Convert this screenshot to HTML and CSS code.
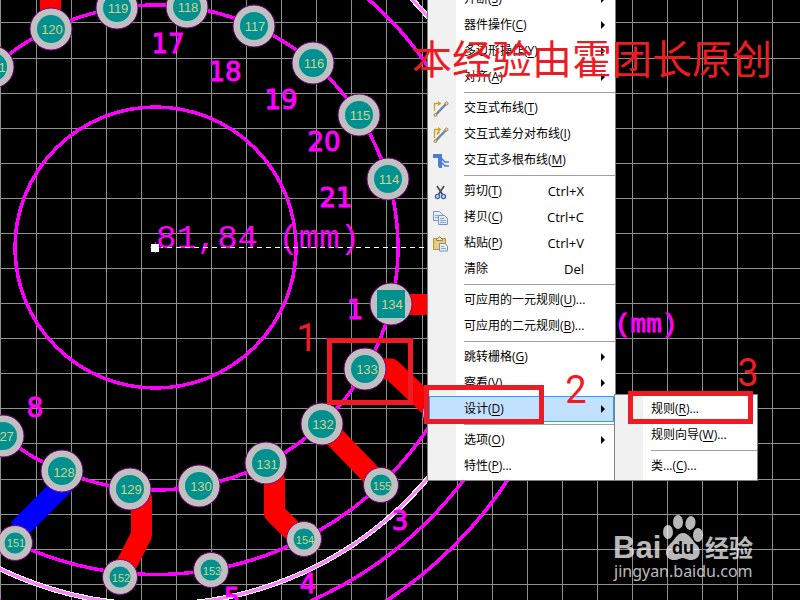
FILE: index.html
```
<!DOCTYPE html>
<html lang="zh-CN">
<head>
    <meta charset="utf-8">
    <title>PCB 编辑器</title>
    <link rel="stylesheet" href="styles.css">
</head>
<body>
    <main class="workspace">
        <!-- Board -->
        <svg class="board" aria-label="PCB">
            <defs>
                <g id="pad">
                    <circle class="ring" r="21"/>
                    <circle class="hole" r="14"/>
                </g>
                <g id="via">
                    <circle class="ring" r="17.5"/>
                    <circle class="hole" r="10.5"/>
                </g>
            </defs>

            <path class="grid" d="M.5 0V3000M36.5 0V3000M71.5 0V3000M106.5 0V3000M141.5 0V3000M176.5 0V3000M211.5 0V3000M246.5 0V3000M281.5 0V3000M316.5 0V3000M351.5 0V3000M386.5 0V3000M422.5 0V3000M457.5 0V3000M492.5 0V3000M527.5 0V3000M562.5 0V3000M597.5 0V3000M632.5 0V3000M667.5 0V3000M702.5 0V3000M737.5 0V3000M772.5 0V3000"/>
            <path class="grid" d="M0 22.5H3000M0 58.5H3000M0 93.5H3000M0 128.5H3000M0 163.5H3000M0 198.5H3000M0 233.5H3000M0 268.5H3000M0 303.5H3000M0 338.5H3000M0 373.5H3000M0 408.5H3000M0 443.5H3000M0 479.5H3000M0 514.5H3000M0 549.5H3000M0 584.5H3000"/>

            <g class="silk">
                <circle cx="155.5" cy="247.5" r="140.5"/>
                <circle cx="155.5" cy="247.5" r="242.5"/>
                <circle cx="155.5" cy="247.5" r="327"/>
                <circle cx="155.5" cy="247.5" r="386"/>
                <circle cx="155.5" cy="247.5" r="422"/>
                <circle class="outline" cx="155.5" cy="247.5" r="357"/>
                <circle class="selected" cx="155.5" cy="247.5" r="357"/>
            </g>

            <g class="trace">
                <path d="M50.500 29V-10"/>
                <path d="M391 304.500H440"/>
                <path d="M365 369H391L440 416"/>
                <path d="M322 424L381 485"/>
                <path d="M266 466L274.500 480V513L303 541"/>
                <path d="M131 489L141.500 498V535L120 577"/>
                <path class="bottom" d="M66 482L18 530"/>
            </g>

            <g class="designator">
                <text x="168" y="53">17</text>
                <text x="225" y="81">18</text>
                <text x="281" y="109">19</text>
                <text x="324" y="151">20</text>
                <text x="336" y="207">21</text>
                <text x="355" y="319">1</text>
                <text x="35" y="417">8</text>
                <text x="400" y="530">3</text>
                <text x="308" y="593">4</text>
                <text x="232" y="607">5</text>
            </g>

            <!-- Pads -->
            <g class="pads">
                <use href="#pad" x="-7" y="67"/><text x="-5" y="72">121</text>
                <use href="#pad" x="51" y="29"/><text x="52" y="34">120</text>
                <use href="#pad" x="117" y="8"/><text x="118" y="13">119</text>
                <use href="#pad" x="187" y="7"/><text x="188" y="12">118</text>
                <use href="#pad" x="254" y="26"/><text x="255" y="31">117</text>
                <use href="#pad" x="313" y="63"/><text x="314" y="68">116</text>
                <use href="#pad" x="359" y="115"/><text x="360" y="120">115</text>
                <use href="#pad" x="388" y="179"/><text x="389" y="184">114</text>
                <circle class="ring" cx="391" cy="304" r="21"/>
                <rect class="hole" x="377" y="290" width="28" height="28"/><text x="392" y="309">134</text>
                <use href="#pad" x="365" y="369"/><text x="367" y="374">133</text>
                <use href="#pad" x="322" y="424"/><text x="323" y="429">132</text>
                <use href="#pad" x="266" y="463"/><text x="267" y="469">131</text>
                <use href="#pad" x="199" y="486"/><text x="201" y="491">130</text>
                <use href="#pad" x="130" y="489"/><text x="131" y="494">129</text>
                <use href="#pad" x="62" y="471"/><text x="64" y="477">128</text>
                <use href="#pad" x="3" y="436"/><text x="3" y="441">127</text>
            </g>
            <g class="pads vias">
                <use href="#via" x="15" y="543"/><text x="16" y="547">151</text>
                <use href="#via" x="120" y="577"/><text x="121" y="582">152</text>
                <use href="#via" x="211" y="570"/><text x="212" y="575">153</text>
                <use href="#via" x="304" y="539"/><text x="305" y="544">154</text>
                <use href="#via" x="381" y="485"/><text x="382" y="490">155</text>
                <use href="#via" x="440" y="413"/>
            </g>

            <!-- Ruler -->
            <text class="measure" x="156" y="248">81,84 (mm)</text>
            <text class="measure unit" x="615" y="332">(mm)</text>
            <path class="ruler" d="M158 247.500H424"/>
            <path class="cross" d="M150 247.500H161M155.500 242V253"/>
            <rect class="origin" x="151" y="244" width="8" height="8"/>

            <!-- Watermark -->
            <g class="watermark">
                <text class="brand" x="613" y="558">Bai</text>
                <ellipse cx="668" cy="532" rx="5" ry="7"/>
                <ellipse cx="678" cy="522" rx="5" ry="7"/>
                <ellipse cx="690.500" cy="523" rx="5" ry="7" transform="rotate(12 690.500 523)"/>
                <ellipse cx="698" cy="535" rx="5" ry="7"/>
                <path d="M683 533C689 533 692 540 696 544C702 549 701 559 692 560C686 560 685 558 683 558C680 558 679 560 674 560C665 560 664 550 669 545C674 541 677 533 683 533Z"/>
                <text class="cn" x="705" y="557">经验</text>
                <text class="url" x="614" y="577">jingyan.baidu.com</text>
            </g>
            <text class="du" x="683" y="554">du</text>
        </svg>

        <!-- Context menu -->
        <div class="menu context" role="menu">
            <button class="item" role="menuitem"><span class="label">开断(<u>S</u>)</span><span class="arrow"></span></button>
            <button class="item" role="menuitem"><span class="label">器件操作(<u>C</u>)</span><span class="arrow"></span></button>
            <button class="item" role="menuitem"><span class="label">多边形操作(<u>Y</u>)</span><span class="arrow"></span></button>
            <button class="item" role="menuitem"><span class="label">对齐(<u>A</u>)</span><span class="arrow"></span></button>
            <hr>
            <button class="item" role="menuitem">
                <svg class="icon" viewBox="0 0 16 16"><path class="gold" d="M1.500 10V2.500H6"/><path class="tip" d="M5 0L8.500 2.500L5 5Z"/><path class="wire" d="M3 13.500L13 3"/><circle class="dot" cx="2.500" cy="14" r="1.500"/><circle class="dot" cx="13.500" cy="2.500" r="1.500"/></svg>
                <span class="label">交互式布线(<u>T</u>)</span>
            </button>
            <button class="item" role="menuitem">
                <svg class="icon" viewBox="0 0 16 16"><path class="gold" d="M1.500 11V2.500H6M4.500 8V5.500H7"/><path class="tip" d="M5 0L8.500 2.500L5 5Z"/><path class="wire" d="M3 13.500L13 3"/><circle class="dot" cx="2.500" cy="14" r="1.500"/><circle class="dot" cx="13.500" cy="2.500" r="1.500"/></svg>
                <span class="label">交互式差分对布线(<u>I</u>)</span>
            </button>
            <button class="item" role="menuitem">
                <svg class="icon" viewBox="0 0 16 16"><path class="bus" d="M0 1H9V15H6L5 13V5H0Z"/><path class="branch" d="M8 5L12 9H16M8 9L12 13H16"/></svg>
                <span class="label">交互式多根布线(<u>M</u>)</span>
            </button>
            <hr>
            <button class="item" role="menuitem">
                <svg class="icon" viewBox="0 0 16 16"><path class="blade" d="M4 2L9.500 10.500M11 2L5.500 10.500"/><circle class="grip" cx="4.500" cy="12.500" r="2"/><circle class="grip" cx="10.500" cy="12.500" r="2"/></svg>
                <span class="label">剪切(<u>T</u>)</span><kbd>Ctrl+X</kbd>
            </button>
            <button class="item" role="menuitem">
                <svg class="icon" viewBox="0 0 16 16"><path class="sheet" d="M.5 1.500H6.500L9.500 4.500V10.500H.5Z"/><path class="sheet" d="M5.500 5.500H11.500L14.500 8.500V14.500H5.500Z"/><path class="lines" d="M2 5.500H5M2 7.500H5M7 8.500H11M7 10.500H13M7 12.500H13"/></svg>
                <span class="label">拷贝(<u>C</u>)</span><kbd>Ctrl+C</kbd>
            </button>
            <button class="item" role="menuitem">
                <svg class="icon" viewBox="0 0 16 16"><path class="board-clip" d="M.5 2.500H12.500V13.500H.5Z"/><path class="clip" d="M3.500 4.500V2.500H5L6.500.5L8 2.500H9.500V4.500Z"/><path class="sheet" d="M6.500 7.500H12L14.500 10V15H6.500Z"/><path class="lines" d="M8 10.500H11M8 12.500H13"/></svg>
                <span class="label">粘贴(<u>P</u>)</span><kbd>Ctrl+V</kbd>
            </button>
            <button class="item" role="menuitem"><span class="label">清除</span><kbd>Del</kbd></button>
            <hr>
            <button class="item" role="menuitem"><span class="label">可应用的一元规则(<u>U</u>)...</span></button>
            <button class="item" role="menuitem"><span class="label">可应用的二元规则(<u>B</u>)...</span></button>
            <hr>
            <button class="item" role="menuitem"><span class="label">跳转栅格(<u>G</u>)</span><span class="arrow"></span></button>
            <button class="item" role="menuitem"><span class="label">察看(<u>V</u>)</span><span class="arrow"></span></button>
            <button class="item active" role="menuitem"><span class="label">设计(<u>D</u>)</span><span class="arrow"></span></button>
            <hr>
            <button class="item" role="menuitem"><span class="label">选项(<u>O</u>)</span><span class="arrow"></span></button>
            <button class="item" role="menuitem"><span class="label">特性(<u>P</u>)...</span></button>
        </div>

        <div class="menu submenu" role="menu">
            <button class="item" role="menuitem"><span class="label">规则(<u>R</u>)...</span></button>
            <button class="item" role="menuitem"><span class="label">规则向导(<u>W</u>)...</span></button>
            <hr>
            <button class="item" role="menuitem"><span class="label">类...(<u>C</u>)...</span></button>
        </div>

        <!-- Annotations -->
        <svg class="notes">
            <rect x="329.500" y="340.500" width="81" height="62"/>
            <rect x="426.500" y="387.500" width="115" height="34"/>
            <rect x="630.500" y="393.500" width="120" height="28"/>
            <text class="step" x="307" y="351">1</text>
            <text class="step" x="576" y="403">2</text>
            <text class="step" x="748" y="386">3</text>
            <text class="credit" x="412" y="74">本经验由霍团长原创</text>
        </svg>
    </main>
</body>
</html>
```
FILE: styles.css
```
body {
    margin: 0;
    background: #000;
    font-family: "Open Sans", "Noto Sans CJK SC", sans-serif;
    font-size: 12px;
}

.workspace {
    position: relative;
    min-height: 100vh;
    overflow: hidden;
}

.board, .notes {
    position: absolute;
    top: 0;
    left: 0;
    width: 100%;
    height: 100%;
}

/* board */
.grid {
    stroke: #909090;
    shape-rendering: crispEdges;
}
.silk circle {
    fill: none;
    stroke: #ff00ff;
    stroke-width: 3.5;
    shape-rendering: crispEdges;
}
.silk .outline {
    stroke: #fff;
    stroke-width: 5;
}
.silk .selected {
    stroke: #ff80ff;
    stroke-width: 3;
}
.trace path {
    fill: none;
    stroke: #ff0000;
    stroke-width: 21;
    stroke-linejoin: round;
}
.trace .bottom {
    stroke: #0000ff;
}
.ring {
    fill: #c0c0c0;
    stroke: #800080;
}
.hole {
    fill: #009090;
}
.pads text {
    font-family: "Liberation Sans", sans-serif;
    font-size: 13px;
    fill: #d2d28c;
    text-anchor: middle;
}
.vias text {
    font-size: 11px;
}
.designator {
    font-family: "DejaVu Sans", sans-serif;
    font-size: 26px;
    fill: #ff00ff;
    stroke: #ff00ff;
    stroke-width: 1;
    text-anchor: middle;
}
.measure {
    font-family: "Liberation Mono", monospace;
    font-size: 34px;
    fill: #ff00ff;
}
.unit {
    font-size: 26px;
    stroke: #ff00ff;
    stroke-width: 1;
}
.ruler {
    stroke: #fff;
    stroke-dasharray: 5 4;
}
.cross {
    stroke: #ff00ff;
}
.origin {
    fill: #fff;
}

.watermark {
    fill: #fff;
    opacity: 0.72;
}
.brand {
    font-family: "Liberation Sans", sans-serif;
    font-size: 31px;
    font-weight: bold;
}
.cn {
    font-family: "Noto Sans CJK SC", sans-serif;
    font-size: 24px;
    font-weight: bold;
}
.url {
    font-family: "Noto Sans", sans-serif;
    font-size: 16px;
}
.du {
    font-family: "Liberation Sans", sans-serif;
    font-size: 18px;
    font-weight: bold;
    text-anchor: middle;
}

/* menus */
.menu {
    position: absolute;
    box-sizing: border-box;
    border: 1px solid #808080;
    padding: 1px;
    background: linear-gradient(to right, #f1f1f1 28px, #fff 28px);
}
.context {
    top: -16px;
    left: 427px;
    width: 189px;
}
.submenu {
    top: 394px;
    left: 614px;
    width: 144px;
}
.menu hr {
    height: 1px;
    margin: 2px -1px 2px 35px;
    border: none;
    background: #a0a0a0;
}
.item {
    position: relative;
    display: flex;
    align-items: center;
    box-sizing: border-box;
    width: 100%;
    height: 26px;
    padding: 0 8px 0 34px;
    border: 1px solid transparent;
    background: none;
    color: #000;
    font: inherit;
    line-height: 16px;
    text-align: left;
    white-space: nowrap;
}
.item:hover, .item.active {
    background: #c2e0ff;
    border-color: #3399ff;
}
.label {
    flex: 1;
}
.item u {
    text-underline-offset: 2px;
}
.item kbd {
    margin-right: 21px;
    font-family: inherit;
    font-size: 13px;
}
.arrow {
    border: 4px solid transparent;
    border-left-color: #000;
    border-right: none;
}
.icon {
    position: absolute;
    left: 3px;
    top: 5px;
    width: 16px;
    height: 16px;
    fill: none;
}
.gold {
    stroke: #d0a020;
    stroke-width: 1.3;
}
.tip {
    fill: #d0a020;
}
.wire {
    stroke: #7088a8;
    stroke-width: 2.5;
}
.dot {
    fill: #e8d9a0;
    stroke: #a08850;
}
.bus {
    fill: #4a7fd8;
}
.branch {
    stroke: #4a7fd8;
    stroke-width: 1.6;
}
.blade {
    stroke: #505050;
    stroke-width: 1.8;
}
.grip {
    stroke: #3f68c0;
    stroke-width: 1.5;
}
.sheet {
    fill: #e4edfa;
    stroke: #7b93bd;
}
.lines {
    stroke: #8ba6d4;
}
.board-clip {
    fill: #ecca78;
    stroke: #b8943c;
}
.clip {
    fill: #f4e8a8;
    stroke: #98865a;
}

/* tutorial marks */
.notes {
    pointer-events: none;
}
.notes rect {
    fill: none;
    stroke: #ed1c24;
    stroke-width: 5;
}
.notes text {
    fill: #ed1c24;
}
.step {
    font-family: Roboto, sans-serif;
    font-size: 38px;
    text-anchor: middle;
}
.credit {
    font-family: "Noto Sans CJK SC", sans-serif;
    font-size: 40px;
}
```
